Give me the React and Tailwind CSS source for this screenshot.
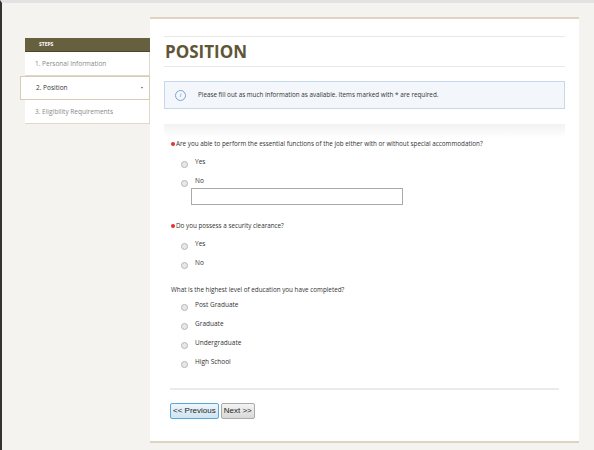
const Radio = ({ label }) => (
  <div className="flex items-center h-[19px] pl-[10px]">
    <span className="w-[7px] h-[7px] rounded-full border border-[#b5b5b5] bg-[#e8e8e8] mt-[5px]" />
    <span className="ml-[7px] text-[6.5px] text-[#333]">{label}</span>
  </div>
);

const Q = ({ req, children }) => (
  <div className="flex items-center text-[6.3px] text-[#333] h-[12px]">
    {req && <span className="w-[4px] h-[4px] rounded-full bg-[#e53030] mr-[1px]" />}
    {children}
  </div>
);

export default function App() {
  return (
    <div className="w-[594px] h-[450px] bg-[#f4f3f0] border-l-2 border-[#333] border-t-[3px] border-t-[#e2e2e2] flex" style={{ fontFamily: '"Open Sans", "Liberation Sans", sans-serif' }}>
      <div className="w-[148px] shrink-0 pt-[35px] pl-[23px]">
        <div className="h-[14px] bg-[#67603f] text-white text-[5px] font-bold flex items-center pl-[14px] border-b border-[#4a452c]">STEPS</div>
        <div className="h-[24px] bg-white border-r border-b border-[#e0d8c8] text-[6.5px] text-[#888] flex items-center pl-[10px]">1. Personal Information</div>
        <div className="h-[24px] bg-white border border-[#d8ccb4] -ml-[5px] text-[6.5px] text-[#333] flex items-center pl-[15px] pr-[6px] justify-between">2. Position<span className="text-[6px]">•</span></div>
        <div className="h-[24px] bg-white border-r border-b border-[#e0d8c8] text-[6.5px] text-[#888] flex items-center pl-[10px]">3. Eligibility Requirements</div>
      </div>
      <div className="w-[429px] mt-[14px] mb-[7px] bg-white border-t-2 border-b-2 border-[#ddd3c0] flex flex-col px-[14px] pt-[17px]">
        <div className="border-t border-[#e8e8e8] border-b h-[31px] flex items-center pl-[1px]">
          <span className="text-[17px] font-bold text-[#5e5636]">POSITION</span>
        </div>
        <div className="mt-[14px] h-[28px] border border-[#c8d8ec] bg-[#f3f7fc] flex items-center pl-[10px]">
          <span className="w-[11px] h-[11px] rounded-full border border-[#7fa4d0] text-[#5b86bf] text-[6px] italic flex items-center justify-center">i</span>
          <span className="ml-[12px] text-[6.3px] text-[#333]">Please fill out as much information as available. Items marked with * are required.</span>
        </div>
        <div className="mt-[15px] h-[14px] bg-gradient-to-b from-[#f2f2f2] to-white" />
        <div className="pl-[7px]">
          <Q req>Are you able to perform the essential functions of the job either with or without special accommodation?</Q>
          <div className="mt-[2px]"><Radio label="Yes" /><Radio label="No" /></div>
          <div className="ml-[20px] -mt-[2px] w-[212px] h-[17px] border border-[#aaa]" />
          <div className="mt-[15px]"><Q req>Do you possess a security clearance?</Q></div>
          <div className="mt-[2px]"><Radio label="Yes" /><Radio label="No" /></div>
          <div className="mt-[12px]"><Q>What is the highest level of education you have completed?</Q></div>
          <div className="-mt-[1px]">
            <Radio label="Post Graduate" /><Radio label="Graduate" /><Radio label="Undergraduate" /><Radio label="High School" />
          </div>
        </div>
        <div className="mt-[17px] mx-[6px] border-t-2 border-[#ebebeb]" />
        <div className="mt-[13px] flex gap-[2px] pl-[6px]">
          <button className="h-[16px] px-[2px] text-[8px] text-[#222] border border-[#5aa7da] rounded-[2px] bg-gradient-to-b from-[#eef6fc] to-[#cfe3f1]" style={{ fontFamily: '"Liberation Sans", sans-serif' }}>&lt;&lt; Previous</button>
          <button className="h-[16px] px-[2px] text-[8px] text-[#222] border border-[#aaa] rounded-[2px] bg-gradient-to-b from-[#f4f4f4] to-[#d8d8d8]" style={{ fontFamily: '"Liberation Sans", sans-serif' }}>Next &gt;&gt;</button>
        </div>
      </div>
    </div>
  );
}
